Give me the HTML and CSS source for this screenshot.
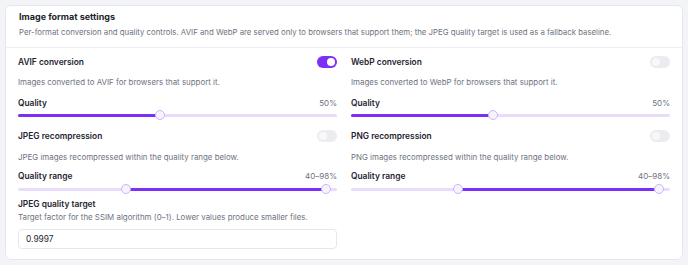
FILE: index.html
```html
<!DOCTYPE html>
<html>
  <head>
    <meta charset="utf-8" />
    <title>Image format settings</title>
    <link rel="stylesheet" href="styles.css">
  </head>
  <body>
    <div class="card">
      <div class="card-header">
        <h1>Image format settings</h1>
        <p>Per-format conversion and quality controls. AVIF and WebP are served only to browsers that support them; the JPEG quality target is used as a fallback baseline.</p>
      </div>

      <div class="card-body">
        <!-- 左列 -->
        <div class="column">
          <div class="switch-row">
            <span class="label">AVIF conversion</span>
            <span class="switch on"></span>
          </div>
          <p class="hint">Images converted to AVIF for browsers that support it.</p>
          <div class="slider-field">
            <div class="value-row">
              <span class="label">Quality</span>
              <span class="value">50%</span>
            </div>
            <div class="slider">
              <div class="track"></div>
              <div class="fill" style="left: 0; width: 44.5%"></div>
              <div class="thumb" style="left: 44.5%"></div>
            </div>
          </div>

          <div class="switch-row second">
            <span class="label">JPEG recompression</span>
            <span class="switch"></span>
          </div>
          <p class="hint second">JPEG images recompressed within the quality range below.</p>
          <div class="slider-field range">
            <div class="value-row">
              <span class="label">Quality range</span>
              <span class="value">40–98%</span>
            </div>
            <div class="slider">
              <div class="track"></div>
              <div class="fill" style="left: 33.8%; width: 62.7%"></div>
              <div class="thumb" style="left: 33.8%"></div>
              <div class="thumb" style="left: 96.5%"></div>
            </div>
          </div>

          <div class="target">
            <div class="label">JPEG quality target</div>
            <p class="hint tight">Target factor for the SSIM algorithm (0–1). Lower values produce smaller files.</p>
            <input class="text-input" type="text" value="0.9997" />
          </div>
        </div>

        <!-- 右列 -->
        <div class="column">
          <div class="switch-row">
            <span class="label">WebP conversion</span>
            <span class="switch"></span>
          </div>
          <p class="hint">Images converted to WebP for browsers that support it.</p>
          <div class="slider-field">
            <div class="value-row">
              <span class="label">Quality</span>
              <span class="value">50%</span>
            </div>
            <div class="slider">
              <div class="track"></div>
              <div class="fill" style="left: 0; width: 44.6%"></div>
              <div class="thumb" style="left: 44.6%"></div>
            </div>
          </div>

          <div class="switch-row second">
            <span class="label">PNG recompression</span>
            <span class="switch"></span>
          </div>
          <p class="hint second">PNG images recompressed within the quality range below.</p>
          <div class="slider-field range">
            <div class="value-row">
              <span class="label">Quality range</span>
              <span class="value">40–98%</span>
            </div>
            <div class="slider">
              <div class="track"></div>
              <div class="fill" style="left: 33.6%; width: 62.9%"></div>
              <div class="thumb" style="left: 33.6%"></div>
              <div class="thumb" style="left: 96.5%"></div>
            </div>
          </div>
        </div>
      </div>
    </div>
  </body>
</html>
```

FILE: styles.css
```css
* {
  margin: 0;
  padding: 0;
  box-sizing: border-box;
}

body {
  font-family: "Inter", "Liberation Sans", sans-serif;
  background-color: #f3f4f7;
  color: #1f2430;
  padding: 5px;
  line-height: 12px;
}

.card {
  background-color: #fff;
  border: 1px solid #e6e7ec;
  border-radius: 6px;
  height: 255px;
}

.card-header {
  padding: 5px 13px 9px 13px;
  border-bottom: 1px solid #eeeff3;
}

.card-header h1 {
  font-size: 9px;
  line-height: 12px;
  font-weight: 700;
  color: #1b1f2a;
}

.card-header p {
  margin-top: 3px;
  font-size: 7.8px;
  line-height: 12px;
  color: #6e7380;
}

.card-body {
  display: grid;
  grid-template-columns: 1fr 1fr;
  gap: 14px;
  padding: 8px 12px 13px 12px;
}

.label {
  font-size: 8.4px;
  line-height: 12px;
  font-weight: 600;
  color: #1f2430;
}

.value {
  font-size: 8px;
  line-height: 12px;
  color: #6e7380;
}

.switch-row,
.value-row {
  display: flex;
  justify-content: space-between;
  align-items: center;
  height: 12px;
}

.switch-row.second {
  margin-top: 10px;
}

.switch {
  position: relative;
  width: 20px;
  height: 12px;
  border-radius: 6px;
  background-color: #ececf0;
}

.switch:after {
  content: "";
  position: absolute;
  top: 2px;
  left: 2px;
  width: 8px;
  height: 8px;
  border-radius: 50%;
  background-color: #f8f8fa;
}

.switch.on {
  background-color: #7b2ff7;
}

.switch.on:after {
  left: 10px;
  background-color: #fff;
}

.hint {
  margin-top: 8px;
  font-size: 7.9px;
  line-height: 12px;
  color: #6e7380;
}

.hint.second {
  margin-top: 9px;
}

.hint.tight {
  margin-top: 1px;
}

.slider-field {
  margin-top: 9px;
}

.slider-field.range {
  margin-top: 7px;
}

.slider {
  position: relative;
  height: 10px;
  margin-top: 1px;
}

.range .slider {
  margin-top: 2px;
}

.slider .track {
  position: absolute;
  left: 0;
  right: 0;
  top: 3.5px;
  height: 3px;
  border-radius: 2px;
  background-color: #e8dcfd;
}

.slider .fill {
  position: absolute;
  top: 3.5px;
  height: 3px;
  border-radius: 2px;
  background-color: #7b2ff7;
}

.slider .thumb {
  position: absolute;
  top: 0;
  width: 10px;
  height: 10px;
  margin-left: -5px;
  border-radius: 50%;
  background-color: #f6f3ff;
  border: 1.5px solid #c9b5fb;
}

.target {
  margin-top: 4px;
}

.text-input {
  display: block;
  width: 100%;
  height: 20px;
  margin-top: 6px;
  padding: 0 7px;
  border: 1px solid #e6e7ec;
  border-radius: 4px;
  font-family: "Inter", "Liberation Sans", sans-serif;
  font-size: 8.4px;
  color: #1f2430;
  background-color: #fff;
}
```
